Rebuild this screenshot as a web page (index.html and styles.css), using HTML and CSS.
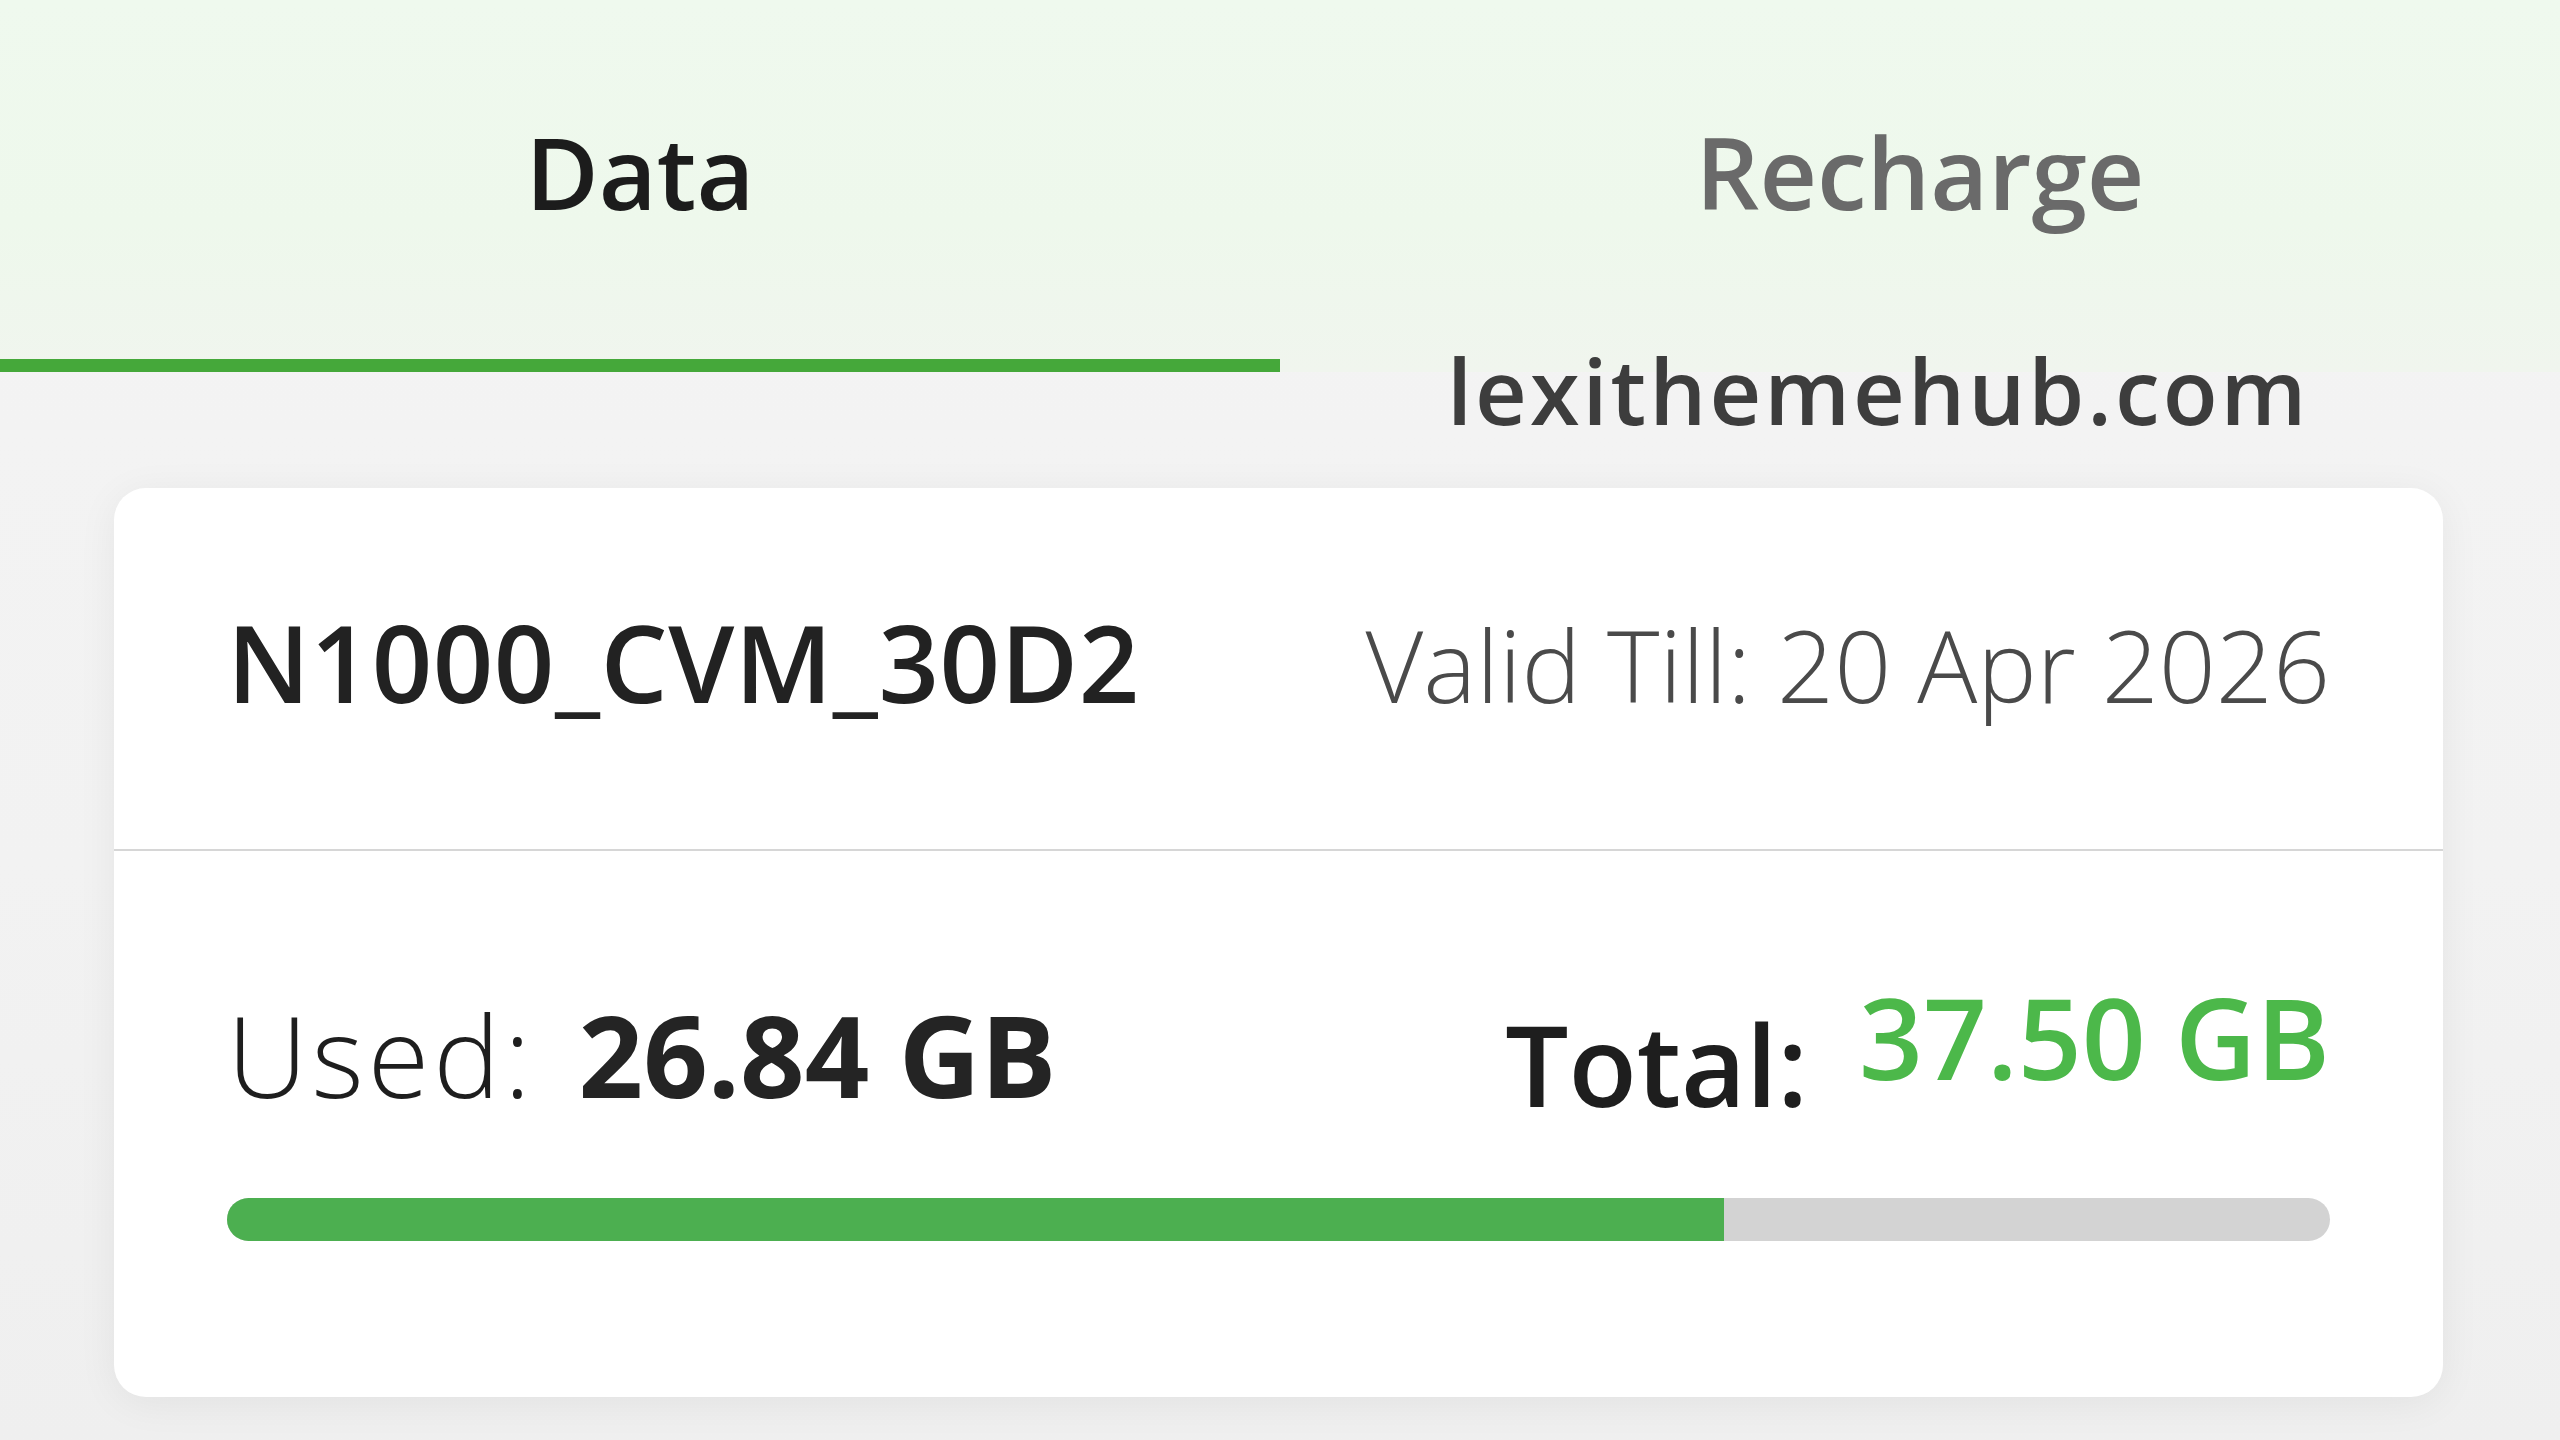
FILE: index.html
```html
<!DOCTYPE html>
<html lang="en">
<head>
    <meta charset="UTF-8">
    <meta name="viewport" content="width=device-width, initial-scale=1.0">
    <title>Data Balance</title>
    <link rel="stylesheet" href="styles.css">
</head>
<body>
    <div class="page">
        <!-- Tabs -->
        <div class="tabs">
            <div class="tab active">Data</div>
            <div class="tab">Recharge</div>
        </div>
        <div class="watermark">lexithemehub.com</div>

        <!-- Plan card -->
        <div class="card">
            <div class="plan-row">
                <div class="plan-name">N1000_CVM_30D2</div>
                <div class="plan-valid">Valid Till: 20 Apr 2026</div>
            </div>
            <div class="usage">
                <div class="usage-row">
                    <div class="used">
                        <span class="label">Used:</span>
                        <span class="used-value">26.84 GB</span>
                    </div>
                    <div class="total">
                        <span class="total-label">Total:</span>
                        <span class="total-value">37.50 GB</span>
                    </div>
                </div>
                <div class="bar">
                    <div class="bar-fill" style="width: 71.2%;"></div>
                </div>
            </div>
        </div>
    </div>
</body>
</html>
```

FILE: styles.css
```css
body {
    font-family: 'Open Sans', 'Noto Sans', sans-serif;
    margin: 0;
    padding: 0;
    background-color: #f2f2f2;
    width: 2560px;
    height: 1440px;
    overflow: hidden;
}
.page {
    position: relative;
    height: 1440px;
    background: linear-gradient(to bottom, #f4f4f4 0%, #f2f2f2 60%, #efefef 100%);
}
.tabs {
    display: flex;
    background: linear-gradient(to bottom, #eff9ee 0%, #eef8ec 60%, #f0f5ee 100%);
}
.tab {
    flex: 1;
    text-align: center;
    font-size: 100px;
    line-height: 1;
    font-weight: 600;
    color: #6a6a6a;
    padding: 121px 0 138px;
    border-bottom: 13px solid transparent;
}
.tab.active {
    color: #1c1c1c;
    border-bottom-color: #45a83a;
}
.watermark {
    position: absolute;
    left: 1447px;
    top: 345px;
    font-size: 90px;
    line-height: 1;
    font-weight: 600;
    letter-spacing: 3px;
    color: #3d3d3d;
}
.card {
    background: #ffffff;
    margin: 116px 117px 0 114px;
    border-radius: 32px;
    box-shadow: 0 6px 40px rgba(0, 0, 0, 0.06);
}
.plan-row {
    display: flex;
    justify-content: space-between;
    align-items: baseline;
    box-sizing: border-box;
    height: 363px;
    padding: 121px 113px 0 113px;
    border-bottom: 2px solid #d6d6d6;
}
.plan-name {
    font-size: 106px;
    line-height: 1;
    font-weight: 600;
    letter-spacing: 0.5px;
    color: #222222;
}
.plan-valid {
    font-size: 100px;
    line-height: 1;
    font-weight: 300;
    color: #4a4a4a;
}
.usage {
    padding: 130px 113px 156px 113px;
}
.usage-row {
    display: flex;
    justify-content: space-between;
    align-items: flex-start;
}
.used {
    display: flex;
    align-items: baseline;
    margin-top: 17px;
    font-size: 112px;
    line-height: 1;
}
.label {
    font-weight: 300;
    letter-spacing: 4px;
    color: #1e1e1e;
}
.used-value {
    font-size: 113px;
    font-weight: 700;
    color: #242424;
    margin-left: 44px;
}
.total {
    display: flex;
    align-items: flex-start;
    font-size: 112px;
    line-height: 1;
}
.total-label {
    font-weight: 600;
    color: #1e1e1e;
    margin-top: 27px;
}
.total-value {
    font-weight: 600;
    color: #4cb84a;
    margin-left: 51px;
}
.bar {
    margin-top: 78px;
    height: 43px;
    border-radius: 22px;
    background-color: #d3d3d3;
    overflow: hidden;
}
.bar-fill {
    height: 100%;
    background-color: #4caf50;
}
```
